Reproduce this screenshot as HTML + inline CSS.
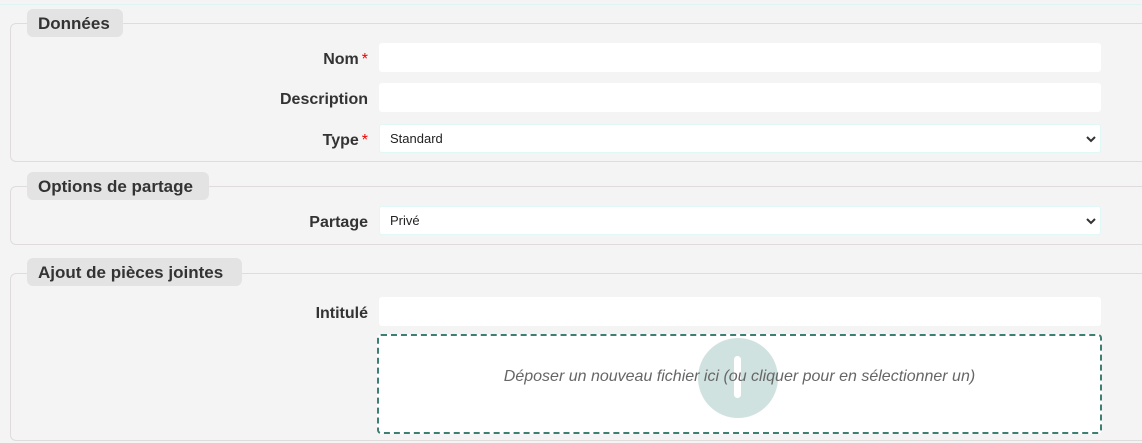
<!DOCTYPE html>
<html><head><meta charset="utf-8"><style>
body{margin:0;width:1142px;height:443px;background:#f4f4f4;font-family:"Liberation Sans",Arial,sans-serif;position:relative;overflow:hidden;color:#333}
.top{position:absolute;left:0;top:0;width:1142px;height:4px;border-bottom:1px solid #dff5f3;background:#f4f4f4}
.box{position:absolute;left:10px;width:1140px;border:1px solid #e0dcdc;border-radius:6px;box-sizing:border-box}
.leg{position:absolute;left:27px;height:28px;background:#e3e3e3;border-radius:6px;font-weight:bold;font-size:17px;line-height:30px;padding:0 11px;box-sizing:border-box;color:#333}
.lab{position:absolute;right:774px;font-weight:bold;font-size:16px;line-height:31px;text-align:right;color:#333}
.lab .s{color:#e00;font-weight:normal;margin-left:3px}
.in{position:absolute;left:379px;width:722px;height:29px;background:#fff;border-radius:3px;box-sizing:border-box}
.sel{border:1px solid #e0f8f6;font-size:13px;line-height:27px;padding-left:10px;color:#222}
.sel svg{position:absolute;right:4px;top:10px}
.drop{position:absolute;left:377px;top:334px;width:725px;height:100px;border:2px dashed #3d7f72;border-radius:4px;box-sizing:border-box;background:#fff}
.circ{position:absolute;left:698px;top:338px;width:80px;height:80px;border-radius:50%;background:#d0e2e0}
.bar{position:absolute;left:734px;top:356px;width:7px;height:42px;border-radius:4px;background:#fff}
.dt{position:absolute;left:377px;width:725px;top:368px;text-align:center;font-style:italic;font-size:16px;color:#666}
</style></head><body>
<div class="top"></div>
<div class="box" style="top:23px;height:139px"></div>
<div class="leg" style="top:9px;width:96px">Données</div>
<div class="lab" style="top:44px">Nom<span class="s">*</span></div>
<div class="in" style="top:43px"></div>
<div class="lab" style="top:84px">Description</div>
<div class="in" style="top:83px"></div>
<div class="lab" style="top:125px">Type<span class="s">*</span></div>
<div class="in sel" style="top:124px">Standard<svg width="10" height="8" viewBox="0 0 10 8"><path d="M1 2l4 4 4-4" stroke="#333" stroke-width="2" fill="none"/></svg></div>

<div class="box" style="top:186px;height:59px"></div>
<div class="leg" style="top:172px;width:182px">Options de partage</div>
<div class="lab" style="top:207px">Partage</div>
<div class="in sel" style="top:206px">Privé<svg width="10" height="8" viewBox="0 0 10 8"><path d="M1 2l4 4 4-4" stroke="#333" stroke-width="2" fill="none"/></svg></div>

<div class="box" style="top:273px;height:168px"></div>
<div class="leg" style="top:258px;width:215px">Ajout de pièces jointes</div>
<div class="lab" style="top:298px">Intitulé</div>
<div class="in" style="top:297px"></div>
<div class="drop"></div>
<div class="circ"></div>
<div class="bar"></div>
<div class="dt">Déposer un nouveau fichier ici (ou cliquer pour en sélectionner un)</div>
</body></html>
